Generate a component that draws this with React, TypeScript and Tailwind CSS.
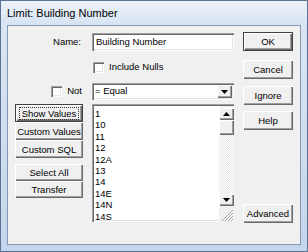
import React from 'react';

const raised =
  'shadow-[inset_1px_1px_0_#ffffff,inset_-1px_-1px_0_#696969,inset_-2px_-2px_0_#a0a0a0]';
const sunken =
  'shadow-[inset_1px_1px_0_#a0a0a0,inset_2px_2px_0_#696969,inset_-1px_-1px_0_#ffffff,inset_-2px_-2px_0_#e3e3e3]';

const Btn: React.FC<{ label: string; className?: string; def?: boolean; focus?: boolean }> = ({
  label,
  className = '',
  def,
  focus
}) => (
  <div
    className={`flex items-center justify-center bg-[#f0f0f0] ${
      def ? 'border border-[#404040]' : ''
    } ${raised} ${className}`}
  >
    <span className={`px-[2px] leading-[11px] ${focus ? 'outline outline-1 outline-dotted outline-[#333]' : ''}`}>
      {label}
    </span>
  </div>
);

const CheckBox: React.FC = () => <div className={`w-[11px] h-[11px] bg-white ${sunken}`} />;

const Arrow: React.FC<{ up?: boolean }> = ({ up }) => (
  <svg width="7" height="4" viewBox="0 0 7 4">
    <path d={up ? 'M0 4 L3.5 0 L7 4 Z' : 'M0 0 L7 0 L3.5 4 Z'} fill="#000" />
  </svg>
);

const values = ['1', '10', '11', '12', '12A', '13', '14', '14E', '14N', '14S'];

export default function App() {
  return (
    <div className="w-[308px] h-[252px] border border-[#5b7296] bg-gradient-to-b from-[#dce7f4] to-[#c4d6ec] flex flex-col font-['Liberation_Sans',Arial,sans-serif] text-black">
      {/* title bar */}
      <div className="h-[24px] flex items-center pl-[6px] text-[11px] bg-gradient-to-b from-[#eef3fa] to-[#d6e3f2]">
        Limit: Building Number
      </div>

      {/* client area */}
      <div className="mx-[6px] w-[294px] h-[220px] border border-[#8598b2] bg-[#f0f0f0] flex px-[7px] pt-[6px] text-[9.5px]">
        <div className="flex flex-col w-[219px] mt-[1px]">
          {/* name */}
          <div className="flex items-center h-[18px] gap-[9px]">
            <div className="w-[68px] text-right pr-[2px]">Name:</div>
            <div className={`w-[142px] h-[18px] bg-white flex items-center pl-[4px] ${sunken}`}>
              Building Number
            </div>
          </div>

          {/* include nulls */}
          <div className="flex items-center h-[11px] mt-[11px] ml-[78px] gap-[5px]">
            <CheckBox />
            <span>Include Nulls</span>
          </div>

          {/* not + operator */}
          <div className="flex items-center h-[17px] mt-[10px] gap-[9px]">
            <div className="w-[68px] flex items-center justify-end gap-[5px] pr-[1px]">
              <CheckBox />
              <span>Not</span>
            </div>
            <div className={`w-[142px] h-[17px] bg-white flex items-center p-[2px] ${sunken}`}>
              <span className="flex-1 pl-[1px]">= Equal</span>
              <div className={`w-[15px] h-[13px] bg-[#f0f0f0] flex items-center justify-center ${raised}`}>
                <Arrow />
              </div>
            </div>
          </div>

          {/* buttons + list */}
          <div className="flex mt-[4px] gap-[9px]">
            <div className="w-[68px] flex flex-col">
              <Btn label="Show Values" className="h-[18px]" def focus />
              <Btn label="Custom Values" className="h-[18px]" />
              <Btn label="Custom SQL" className="h-[18px]" />
              <Btn label="Select All" className="h-[17px] mt-[6px]" />
              <Btn label="Transfer" className="h-[17px]" />
            </div>

            <div className={`w-[142px] h-[118px] bg-white flex pl-[2px] pt-[2px] ${sunken}`}>
              <div className="flex-1 flex flex-col pt-[2px] pl-[1px] leading-[11.4px]">
                {values.map(v => (
                  <div key={v}>{v}</div>
                ))}
              </div>
              <div className="w-[15px] flex flex-col bg-[repeating-conic-gradient(#e8e8e8_0%_25%,#ffffff_0%_50%)] bg-[length:2px_2px]">
                <div className={`mt-[2px] h-[12px] bg-[#f0f0f0] flex items-center justify-center ${raised}`}>
                  <Arrow up />
                </div>
                <div className={`h-[15px] bg-[#f0f0f0] ${raised}`} />
                <div className="flex-1" />
                <div className={`h-[12px] bg-[#f0f0f0] flex items-center justify-center ${raised}`}>
                  <Arrow />
                </div>
                <div className="h-[16px] bg-[#f0f0f0] flex items-end justify-end">
                  <svg width="13" height="13" viewBox="0 0 13 13">
                    <g stroke="#a0a0a0" strokeWidth="1">
                      <path d="M12 1 L1 12" />
                      <path d="M12 4 L4 12" />
                      <path d="M12 7 L7 12" />
                      <path d="M12 10 L10 12" />
                    </g>
                    <g stroke="#ffffff" strokeWidth="1">
                      <path d="M12 2 L2 12" />
                      <path d="M12 5 L5 12" />
                      <path d="M12 8 L8 12" />
                    </g>
                  </svg>
                </div>
              </div>
            </div>
          </div>
        </div>

        {/* right buttons */}
        <div className="flex flex-col w-[50px] ml-[9px]">
          <Btn label="OK" className="h-[19px]" def />
          <Btn label="Cancel" className="h-[19px] mt-[9px]" />
          <Btn label="Ignore" className="h-[19px] mt-[7px]" />
          <Btn label="Help" className="h-[19px] mt-[6px]" />
          <Btn label="Advanced" className="h-[19px] mt-[74px]" />
        </div>
      </div>
    </div>
  );
}
